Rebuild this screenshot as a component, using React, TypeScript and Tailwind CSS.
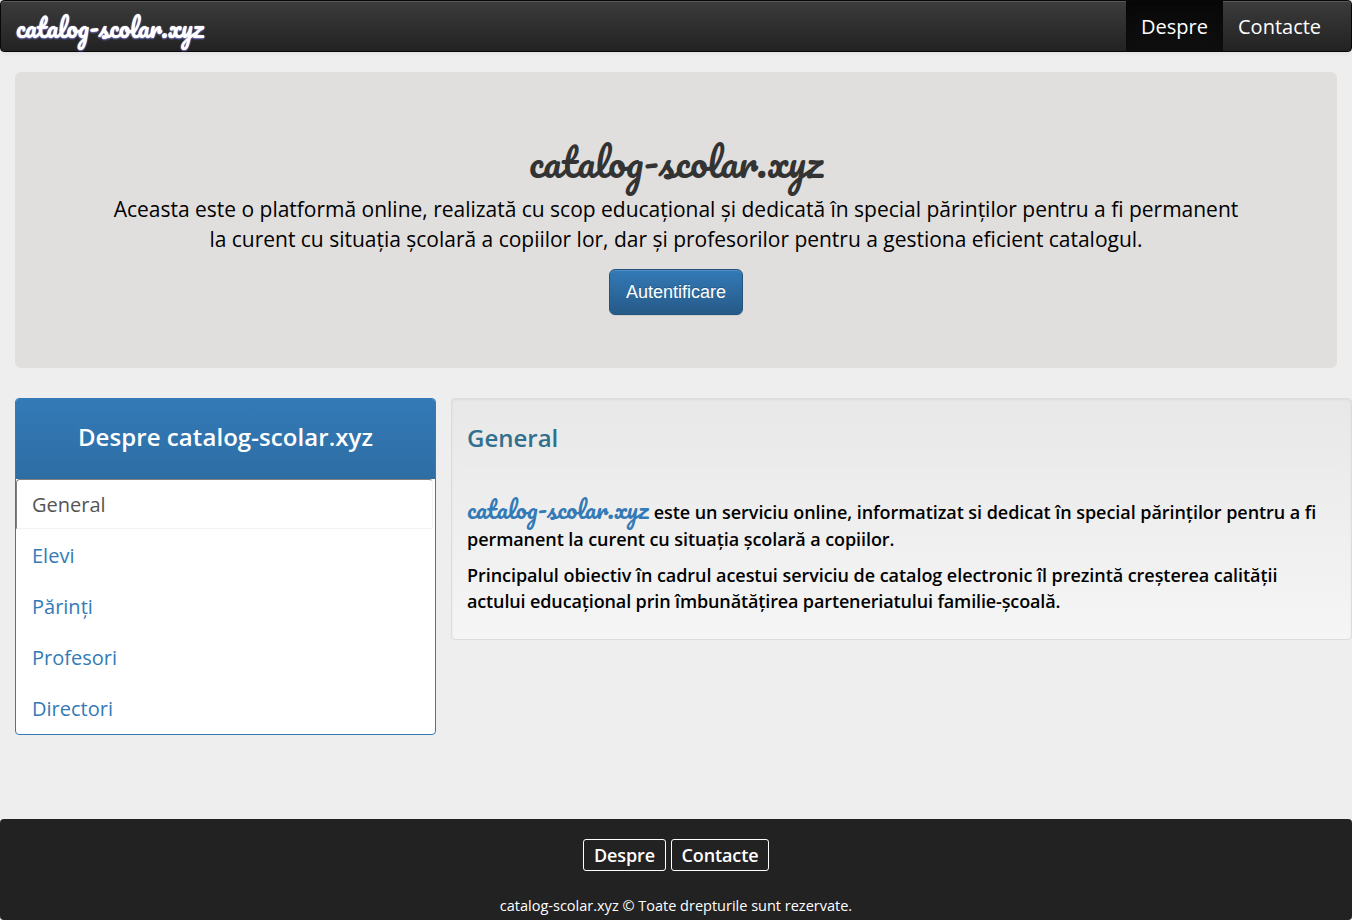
import React from "react";

const links = ["Elevi", "Părinți", "Profesori", "Directori"];

function Wordmark({ className }: { className: string }) {
  return (
    <span className={"inline-block whitespace-nowrap font-['Pacifico','Lato','Liberation_Sans',sans-serif] font-normal " + className}>
      catalog-scolar.xyz
    </span>
  );
}

export default function App() {
  return (
    <div className="flex h-[920px] w-[1352px] flex-col overflow-hidden bg-[#eeeeee] font-['Open_Sans','Noto_Sans',sans-serif] text-black">
      <nav className="flex h-[52px] shrink-0 justify-between rounded border border-[#080808] bg-linear-to-b from-[#3c3c3c] to-[#222222] pr-[14px] pl-[15px] shadow-[inset_0_1px_0_rgba(255,255,255,0.15),0_1px_5px_rgba(0,0,0,0.075)]">
        <a className="flex h-[50px] items-center">
          <Wordmark className="pt-[2px] text-[25px] leading-[56px] text-white [text-shadow:0_0_1px_#fff,0_1px_2px_#7777dd]" />
        </a>
        <div className="flex text-[20px] leading-[52px] text-white">
          <a className="w-[97px] bg-linear-to-b from-[#080808] to-[#0f0f0f] text-center shadow-[inset_0_3px_9px_rgba(0,0,0,0.25)]">Despre</a>
          <a className="w-[114px] pl-[15px]">Contacte</a>
        </div>
      </nav>

      <header className="mx-[15px] mt-[20px] flex h-[296px] shrink-0 flex-col items-center rounded-md bg-[#e0dfdd] pt-[67px] text-center">
        <h1 className="h-[55px] leading-[46px] text-[#333333]">
          <Wordmark className="text-[39.2px] leading-[45px]" />
        </h1>
        <p className="text-[21px] leading-[30px] tracking-[-0.015px]">
          Aceasta este o platformă online, realizată cu scop educațional și dedicată în special părinților pentru a fi permanent
          <br />
          la curent cu situația școlară a copiilor lor, dar și profesorilor pentru a gestiona eficient catalogul.
        </p>
        <button className="mt-[15px] h-[46px] w-[134px] rounded-md border border-[#245580] bg-linear-to-b from-[#337ab7] to-[#265a88] font-['Liberation_Sans',sans-serif] text-[18px] text-white shadow-[inset_0_1px_0_rgba(255,255,255,0.15),0_1px_1px_rgba(0,0,0,0.075)] [text-shadow:0_-1px_0_rgba(0,0,0,0.2)]">
          Autentificare
        </button>
      </header>

      <main className="mt-[30px] flex flex-1 items-start gap-[15px] pl-[15px]">
        <aside className="h-[337px] w-[421px] rounded border border-[#337ab7] bg-white text-[20px] text-[#337ab7]">
          <h2 className="h-[80px] rounded-t-[3px] bg-linear-to-b from-[#337ab7] to-[#2e6da4] text-center text-[24px] leading-[76px] font-semibold tracking-[0.07px] text-white">
            Despre catalog-scolar.xyz
          </h2>
          <div className="flex flex-col gap-px">
            <a className="mr-[2px] h-[50px] rounded-t border border-t-[#808080] border-r-[#f5f2f2] border-b-[#f2f2f2] border-l-[#808080] pl-[15px] leading-[49px] text-[#555555]">
              General
            </a>
            {links.map((link) => (
              <a key={link} className="h-[50px] pl-[16px] leading-[51px]">
                {link}
              </a>
            ))}
          </div>
        </aside>
        <section className="h-[242px] w-[901px] rounded border border-[#dcdcdc] bg-linear-to-b from-[#e8e8e8] to-[#f5f5f5] px-[15px] shadow-[inset_0_1px_3px_rgba(0,0,0,0.05),0_1px_0_rgba(255,255,255,0.1)]">
          <h2 className="h-[73px] border-b border-[#eeeeee] text-[24px] leading-[78px] font-semibold text-[#31708f]">General</h2>
          <div className="pt-[25px] text-[18px] leading-[26px] font-semibold tracking-[-0.05px]">
            <p className="whitespace-nowrap">
              <Wordmark className="w-[182px] pb-[5px] text-[24.2px] leading-[24px] tracking-normal text-[#337ab7]" />{" "}
              este un serviciu online, informatizat si dedicat în special părinților pentru a fi
              <br />
              <span className="tracking-[-0.07px]">permanent la curent cu situația școlară a copiilor.</span>
            </p>
            <p className="mt-[10px] whitespace-nowrap">
              Principalul obiectiv în cadrul acestui serviciu de catalog electronic îl prezintă creșterea calității
              <br />
              <span className="tracking-[-0.13px]">actului educațional prin îmbunătățirea parteneriatului familie-școală.</span>
            </p>
          </div>
        </section>
      </main>

      <footer className="flex h-[101px] shrink-0 flex-col items-center rounded bg-[#222222] pt-[20px] text-white">
        <div className="flex gap-[5px] text-[18px] leading-[31px] font-semibold tracking-[-0.1px]">
          <a className="h-[32px] w-[83px] rounded-[3px] border border-white text-center">Despre</a>
          <a className="h-[32px] w-[98px] rounded-[3px] border border-white text-center">Contacte</a>
        </div>
        <p className="mt-[25px] text-[14.5px] leading-[20px]">catalog-scolar.xyz © Toate drepturile sunt rezervate.</p>
      </footer>
    </div>
  );
}
